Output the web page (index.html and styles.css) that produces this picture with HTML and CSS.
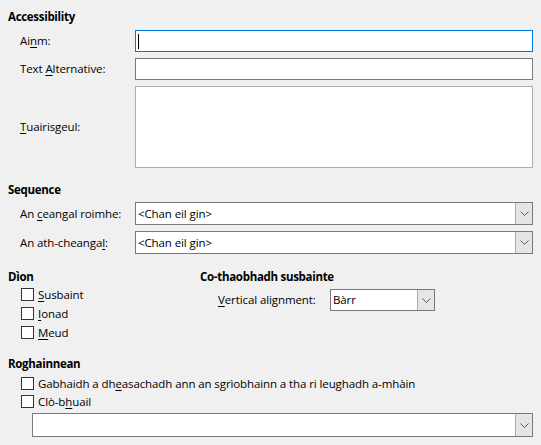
FILE: index.html
```html
<!DOCTYPE html>
<html>
<head>
<meta charset="utf-8">
<link rel="stylesheet" href="styles.css">
</head>
<body>
<div class="page">
  <div class="heading h-acc">Accessibility</div>
  <div class="form-grid">
    <div class="row r-name">
      <label class="lbl">Ai<u>n</u>m:</label>
      <div class="field focused"><span class="caret"></span></div>
    </div>
    <div class="row r-alt">
      <label class="lbl">Text <u>A</u>lternative:</label>
      <div class="field"></div>
    </div>
    <div class="row r-desc">
      <label class="lbl"><u>T</u>uairisgeul:</label>
      <div class="field area"></div>
    </div>
  </div>

  <div class="heading h-seq">Sequence</div>
  <div class="form-grid">
    <div class="row r-combo">
      <label class="lbl">An <u>c</u>eangal roimhe:</label>
      <div class="combo"><span class="combo-text">&lt;Chan eil gin&gt;</span><span class="combo-btn"><svg width="9" height="5" viewBox="0 0 9 5"><path d="M0.5 0.5 L4.5 4.5 L8.5 0.5" fill="none" stroke="#5a5a5a" stroke-width="1"/></svg></span></div>
    </div>
    <div class="row r-combo2">
      <label class="lbl">An ath-cheanga<u>l</u>:</label>
      <div class="combo"><span class="combo-text">&lt;Chan eil gin&gt;</span><span class="combo-btn"><svg width="9" height="5" viewBox="0 0 9 5"><path d="M0.5 0.5 L4.5 4.5 L8.5 0.5" fill="none" stroke="#5a5a5a" stroke-width="1"/></svg></span></div>
    </div>
  </div>

  <div class="two-col">
    <div class="col col-protect">
      <div class="heading">Dìon</div>
      <div class="checks">
        <div class="check"><span class="box"></span><span><u>S</u>usbaint</span></div>
        <div class="check"><span class="box"></span><span><u>I</u>onad</span></div>
        <div class="check"><span class="box"></span><span><u>M</u>eud</span></div>
      </div>
    </div>
    <div class="col col-align">
      <div class="heading">Co-thaobhadh susbainte</div>
      <div class="align-row">
        <label class="lbl"><u>V</u>ertical alignment:</label>
        <div class="combo small"><span class="combo-text">Bàrr</span><span class="combo-btn"><svg width="9" height="5" viewBox="0 0 9 5"><path d="M0.5 0.5 L4.5 4.5 L8.5 0.5" fill="none" stroke="#5a5a5a" stroke-width="1"/></svg></span></div>
      </div>
    </div>
  </div>

  <div class="heading h-opt">Roghainnean</div>
  <div class="checks opts">
    <div class="check"><span class="box"></span><span>Gabhaidh a dh<u>e</u>asachadh ann an sgrìobhainn a tha ri leughadh a-mhàin</span></div>
    <div class="check"><span class="box"></span><span>Clò-b<u>h</u>uail</span></div>
  </div>
  <div class="combo wide"><span class="combo-text"></span><span class="combo-btn"><svg width="9" height="5" viewBox="0 0 9 5"><path d="M0.5 0.5 L4.5 4.5 L8.5 0.5" fill="none" stroke="#5a5a5a" stroke-width="1"/></svg></span></div>
</div>
</body>
</html>
```

FILE: styles.css
```css
html, body {
  margin: 0;
  padding: 0;
  background: #f0f0f0;
}
body {
  font-family: "Open Sans", "Noto Sans", sans-serif;
  font-size: 11.5px;
  letter-spacing: -0.1px;
  color: #000;
  width: 541px;
  height: 445px;
  overflow: hidden;
}
.page {
  padding: 9px 8px 0 8px;
  display: flex;
  flex-direction: column;
}
.heading {
  font-weight: bold;
  letter-spacing: -0.3px;
  line-height: 16px;
  height: 16px;
}
u {
  text-decoration: underline;
  text-underline-offset: 2px;
}
.form-grid {
  display: flex;
  flex-direction: column;
  gap: 6px;
  padding-left: 12px;
}
.h-acc + .form-grid { margin-top: 5px; }
.row {
  display: flex;
  align-items: center;
}
.lbl {
  width: 115px;
  flex: none;
  line-height: 16px;
}
.field {
  flex: 1;
  height: 20px;
  background: #fff;
  border: 1px solid #7a7a7a;
  position: relative;
}
.field.focused {
  border-color: #0078d7;
}
.field.area {
  height: 80px;
  border-color: #adadad;
}
.caret {
  position: absolute;
  left: 2px;
  top: 3px;
  width: 1px;
  height: 15px;
  background: #000;
}
.h-seq { margin-top: 14px; }
.h-seq + .form-grid { margin-top: 4px; }
.combo {
  flex: 1;
  height: 21px;
  background: #fff;
  border: 1px solid #7a7a7a;
  display: flex;
  align-items: stretch;
}
.combo-text {
  flex: 1;
  padding-left: 2px;
  line-height: 21px;
  white-space: nowrap;
}
.combo-btn {
  width: 16px;
  flex: none;
  background: #e5e5e5;
  border-left: 1px solid #adadad;
  display: flex;
  align-items: center;
  justify-content: center;
}
.two-col {
  display: flex;
  margin-top: 15px;
}
.col-protect { width: 192px; }
.checks {
  display: flex;
  flex-direction: column;
  padding-left: 13px;
  margin-top: 0;
}
.check {
  display: flex;
  align-items: center;
  height: 19px;
  gap: 4px;
}
.box {
  width: 11px;
  height: 11px;
  border: 1px solid #333;
  background: #fff;
  flex: none;
}
.align-row {
  display: flex;
  align-items: center;
  padding-left: 18px;
  margin-top: 4px;
}
.align-row .lbl { width: 112px; }
.combo.small {
  flex: none;
  width: 103px;
  height: 20px;
}
.combo.small .combo-text { line-height: 20px; }
.h-opt { margin-top: 14px; }
.opts { margin-top: 2px; }
.opts .check { height: 18px; }
.combo.wide {
  flex: none;
  height: 22px;
  margin-left: 24px;
  margin-top: 3px;
}
```
